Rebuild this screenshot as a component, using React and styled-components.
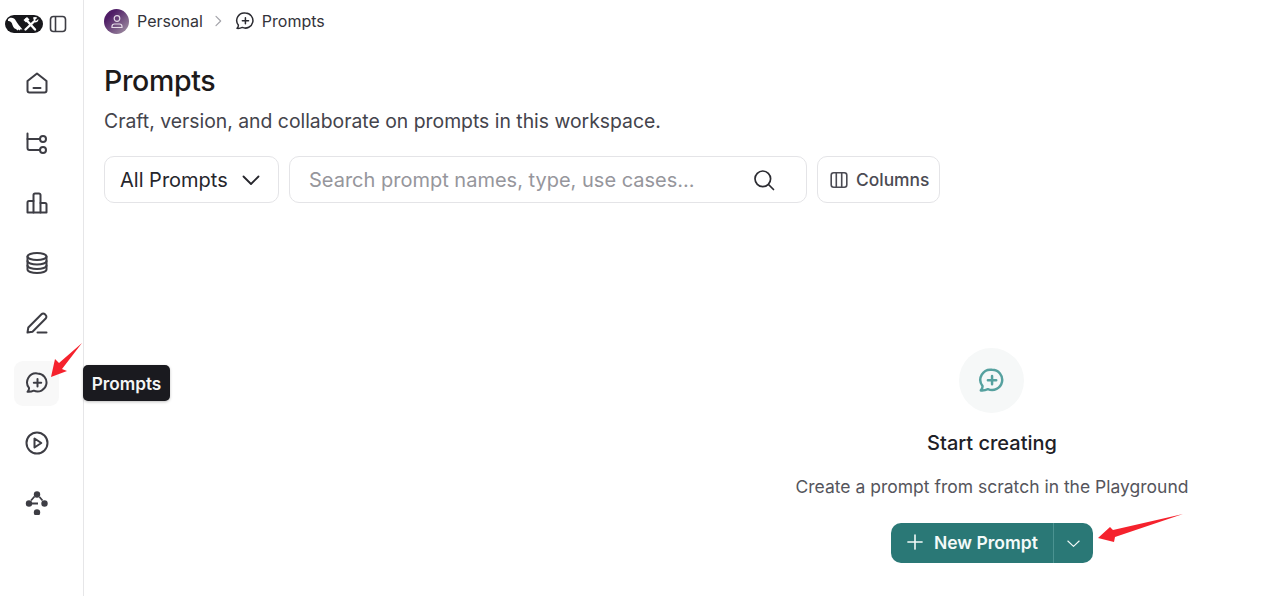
import React from "react";
import styled, { createGlobalStyle } from "styled-components";

const Global = createGlobalStyle`
  html, body { margin: 0; padding: 0; background: #fff; height: 100%; overflow: hidden; }
  body { font-family: Inter, "Liberation Sans", sans-serif; color: #1c1c20; }
  #root { height: 100%; }
`;

const Page = styled.div`position: relative; display: flex; width: 1287px; height: 596px; overflow: hidden;`;
const Sidebar = styled.aside`
  width: 83px; flex: none; border-right: 1px solid #e6e6e8;
  display: flex; flex-direction: column;
`;
const SideTop = styled.div`
  display: flex; align-items: center; gap: 6px;
  padding: 15px 0 0 5px; height: 18px; margin-bottom: 28px;
`;
const LogoPill = styled.div`width: 38px; height: 18px; border-radius: 9px; background: #17171b; display: flex; align-items: center; justify-content: center;`;
const NavList = styled.nav`display: flex; flex-direction: column; gap: 15px; margin-left: 14px;`;
const NavItem = styled.div`
  box-sizing: border-box; padding-bottom: 2px;
  width: 45px; height: 45px; border-radius: 9px; display: flex; align-items: center; justify-content: center;
  background: ${(p) => (p.$active ? "#f8f8f8" : "transparent")}; color: #3d3d44;
`;
const Tooltip = styled.div`
  position: absolute; left: 83px; top: 365px; height: 36px; width: 87px; box-sizing: border-box;
  background: #1a1a1f; color: #f5f5f5; border-radius: 5px; font-size: 17.200px; font-weight: 600;
  display: flex; align-items: center; justify-content: center; box-shadow: 0 1px 3px rgba(0,0,0,.25);
`;
const Main = styled.main`flex: 1; min-width: 0; padding-left: 20px; display: flex; flex-direction: column;`;
const Crumbs = styled.div`display: flex; align-items: center; height: 42px; font-size: 16px; color: #33333a;`;
const Avatar = styled.div`
  width: 25px; height: 25px; border-radius: 50%; margin-right: 8px; color: #e5dbe8;
  background: linear-gradient(135deg, #4f1d66 25%, #a79aa8 100%);
  display: flex; align-items: center; justify-content: center;
`;
const CrumbSep = styled.span`display: flex; margin: 0 9px 0 7px; color: #a4a4aa;`;
const CrumbIcon = styled.span`display: flex; margin-right: 7px; color: #2b2b31;`;
const Title = styled.h1`margin: 20px 0 0; font-size: 28.500px; line-height: 38px; font-weight: 500; color: #1d1a1a; letter-spacing: -0.350px;`;
const Sub = styled.p`margin: 2px 0 0; font-size: 19.370px; line-height: 38px; color: #44444c;`;
const Controls = styled.div`display: flex; gap: 10px; margin-top: 16px; height: 47px;`;
const Box = styled.div`
  box-sizing: border-box; height: 47px; border: 1px solid #e4e4e7; border-radius: 10px; display: flex; align-items: center; background: #fff;
`;
const Select = styled(Box)`width: 175px; padding: 0 16px 0 15px; justify-content: space-between; font-size: 20px; color: #26262c;`;
const Search = styled(Box)`width: 518px; padding: 0 30px 0 19px; justify-content: space-between; font-size: 20px; color: #96969c;`;
const Columns = styled(Box)`width: 123px; padding-left: 12px; gap: 8px; font-size: 17.400px; font-weight: 500; color: #4b4b53;`;
const Empty = styled.div`
  display: flex; flex-direction: column; align-items: center; align-self: flex-start;
  width: 420px; margin: 145px 0 0 678px;
`;
const Circle = styled.div`width: 65px; height: 65px; margin-right: 1px; border-radius: 50%; background: #f6f8f8; color: #56a19f; display: flex; align-items: center; justify-content: center;`;
const EmptyTitle = styled.div`margin-top: 17px; font-size: 20px; line-height: 26px; font-weight: 500; color: #202026;`;
const EmptyText = styled.div`margin-top: 18px; font-size: 17.500px; line-height: 26px; color: #55555c;`;
const Btn = styled.div`
  margin-top: 23px; width: 202px; height: 40px; border-radius: 10px; background: #2a7876; color: #f4faf9;
  display: flex; align-items: stretch; font-size: 17.500px; font-weight: 600;
`;
const BtnMain = styled.div`width: 163px; box-sizing: border-box; padding: 0 0 2px 14px; gap: 9px; display: flex; align-items: center; border-right: 1px solid #4b9391;`;
const BtnCaret = styled.div`flex: 1; display: flex; align-items: center; justify-content: center;`;
const Annot = styled.svg`position: absolute; left: 0; top: 0; pointer-events: none;`;

const I = ({ s = 24, w = 2, children, style }) => (
  <svg width={s} height={s} viewBox="0 0 24 24" fill="none" stroke="currentColor" strokeWidth={w} strokeLinecap="round" strokeLinejoin="round" style={style}>{children}</svg>
);
const Home = () => <I><path d="M2.500 10 12 2.500l9.500 7.500v9.500a2 2 0 0 1-2 2h-15a2 2 0 0 1-2-2z" /><path d="M8.500 17h7" /></I>;
const Flow = () => <I><path d="M2.500 2.500V17a2 2 0 0 0 2 2H15" /><path d="M2.500 8H15" /><circle cx="18" cy="8" r="3" /><circle cx="18" cy="19" r="3" /></I>;
const Bars = () => <I><path d="M2.500 21.500V11.500A1.500 1.500 0 0 1 4 10h4.500V4A1.500 1.500 0 0 1 10 2.500h4A1.500 1.500 0 0 1 15.500 4v8H20a1.500 1.500 0 0 1 1.500 1.500v8z" /><path d="M8.500 10v11.500M15.500 12v9.500" /></I>;
const Db = () => <I><ellipse cx="12" cy="5.500" rx="9.500" ry="3.500" /><path d="M2.500 5.500v13c0 1.900 4.200 3.500 9.500 3.500s9.500-1.600 9.500-3.500v-13" /><path d="M2.500 10c0 1.900 4.200 3.500 9.500 3.500s9.500-1.600 9.500-3.500" /><path d="M2.500 14.500c0 1.900 4.200 3.500 9.500 3.500s9.500-1.600 9.500-3.500" /></I>;
const Pen = () => <I><path d="M2.500 21.500l.8-5L16.500 3.300a2.400 2.400 0 0 1 3.400 0l.8.8a2.400 2.400 0 0 1 0 3.400L7.500 20.700z" /><path d="M12.500 21.500h9" /></I>;
const Chat = ({ s = 24, w = 2 }) => <I s={s} w={w}><path d="M12.500 2.500a9 9 0 1 1-3.700 17.200c-1.900.9-4.100 1.300-6.300 1.100 1-1.100 1.700-2.500 1.500-3.900A9 9 0 0 1 12.500 2.500z" /><path d="M12.500 8v7.400M8.800 11.700h7.400" /></I>;
const Play = () => <I><circle cx="12" cy="12" r="10.500" /><path d="M9.500 7.500v9l6.800-4.500z" /></I>;
const Graph = () => (
  <svg width="24" height="24" viewBox="0 0 24 24" fill="currentColor" stroke="none">
    <circle cx="12" cy="3.500" r="3.200" /><circle cx="4" cy="12.500" r="3.200" /><circle cx="19.500" cy="12.500" r="3.200" /><circle cx="12" cy="21.500" r="3.200" />
    <path d="M9.500 5.500 6 9.500M14.500 6l3 3.500M4 12.500h9" fill="none" stroke="currentColor" strokeWidth="1.800" />
  </svg>
);

const nav = [Home, Flow, Bars, Db, Pen, Chat, Play, Graph];

export default function App() {
  return (
    <Page>
      <Global />
      <Sidebar>
        <SideTop>
          <LogoPill>
            <svg width="34" height="16" viewBox="0 0 34 16" fill="#fff">
              <path d="M1 3.500C2 1.500 5 1 7 2.500c1.500 1.200 2.500 3.500 4 5.500 1 1.400 3 3.700 4.500 5.500l-2-.3-.8 1.300-1.200-1-1 1-1.500-1.500C6.500 12.500 5.500 9 5 7.500 4.300 5.700 3 4.800 1 5z" />
              <path d="M18.500 13.500 27 5.500M19 3.500l9 10" stroke="#fff" strokeWidth="2.400" strokeLinecap="round" fill="none" />
              <path d="M16.500 4l3.500-3 2.500 2.500-3.500 3z M26 1.500c1.500-1 3.500-.6 4.300.3L28 4l1 1 2.300-2c.5 1.500-.8 4-3.800 3.300z" />
            </svg>
          </LogoPill>
          <svg width="18" height="18" viewBox="0 0 18 18" fill="none" stroke="#3d3d44" strokeWidth="1.600">
            <rect x="1.500" y="1.500" width="15" height="15" rx="3" /><path d="M6.500 1.500v15" />
          </svg>
        </SideTop>
        <NavList>
          {nav.map((Icon, i) => (
            <NavItem key={i} $active={i === 5}><Icon /></NavItem>
          ))}
        </NavList>
      </Sidebar>
      <Main>
        <Crumbs>
          <Avatar>
            <svg width="14" height="15" viewBox="0 0 14 15" fill="none" stroke="currentColor" strokeWidth="1.200">
              <circle cx="7" cy="4.500" r="2.800" /><path d="M2 13.500v-1c0-1.500 1.200-2.500 2.500-2.500h5c1.300 0 2.500 1 2.500 2.500v1z" />
            </svg>
          </Avatar>
          Personal
          <CrumbSep><I s={16} w={1.800}><path d="M9 5l7 7-7 7" /></I></CrumbSep>
          <CrumbIcon><Chat s={20} w={1.800} /></CrumbIcon>
          Prompts
        </Crumbs>
        <Title>Prompts</Title>
        <Sub>Craft, version, and collaborate on prompts in this workspace.</Sub>
        <Controls>
          <Select>All Prompts<I s={24} w={1.800} style={{ marginRight: -1 }}><path d="M4.500 8.500 12 16l7.500-7.500" /></I></Select>
          <Search>Search prompt names, type, use cases...<I s={24} w={1.700} style={{ color: "#2b2b31" }}><circle cx="10.800" cy="10.800" r="7.800" /><path d="m16.500 16.500 5 5" /></I></Search>
          <Columns>
            <svg width="18" height="18" viewBox="0 0 18 18" fill="none" stroke="#4b4b53" strokeWidth="1.600"><rect x="1.200" y="1.800" width="15.600" height="14.400" rx="2.500" /><path d="M6.300 1.800v14.400M11.700 1.800v14.400" /></svg>
            Columns
          </Columns>
        </Controls>
        <Empty>
          <Circle><Chat s={27} w={2.200} /></Circle>
          <EmptyTitle>Start creating</EmptyTitle>
          <EmptyText>Create a prompt from scratch in the Playground</EmptyText>
          <Btn>
            <BtnMain><I s={20} w={1.900}><path d="M12 3.500v17M3.500 12h17" /></I>New Prompt</BtnMain>
            <BtnCaret><I s={17} w={1.600}><path d="M4 8.500 12 16l8-7.500" /></I></BtnCaret>
          </Btn>
        </Empty>
      </Main>
      <Tooltip>Prompts</Tooltip>
      <Annot width="1287" height="596" viewBox="0 0 1287 596">
        <path d="M82 343 62 369 67 371 51 377 55 359 59 363z" fill="#f5222d" />
        <path d="M1183 514 1113 530 1110 527 1098 538 1114 542 1115 537z" fill="#f5222d" />
      </Annot>
    </Page>
  );
}
